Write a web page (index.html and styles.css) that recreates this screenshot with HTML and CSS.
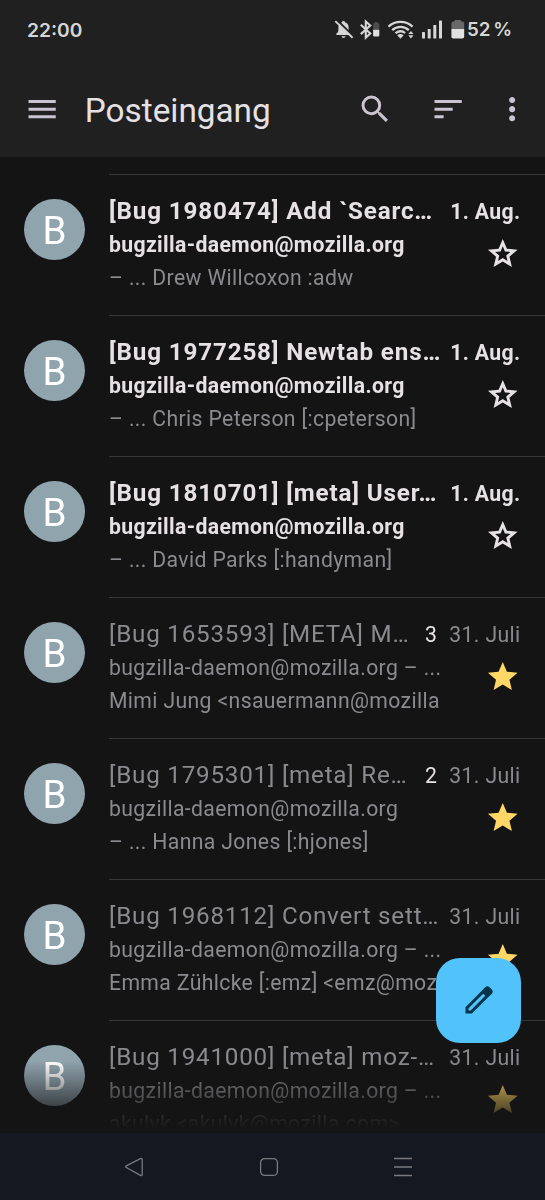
FILE: index.html
```html
<!DOCTYPE html>
<html lang="de">
<head>
<meta charset="utf-8">
<title>Posteingang</title>
<link rel="stylesheet" href="styles.css">
</head>
<body>
<svg class="defs" width="0" height="0">
  <symbol id="star" viewBox="0 0 24 24"><path d="M12 17.27 18.18 21l-1.64-7.03L22 9.24l-7.19-.61L12 2 9.19 8.63 2 9.24l5.46 4.73L5.82 21z"/></symbol>
  <symbol id="star-outline" viewBox="0 0 24 24"><path fill-rule="evenodd" d="M22 9.240l-7.190-.62L12 2 9.190 8.630 2 9.240l5.460 4.730L5.820 21 12 17.270 18.180 21l-1.630-7.030L22 9.240zM12 14.900l-3.200 1.950.85-3.650-2.830-2.450 3.730-.32L12 7l1.450 3.430 3.730.32-2.830 2.450.85 3.650z"/></symbol>
</svg>
<div class="phone">
  <header class="top">
    <div class="status">
      <span class="clock">22:00</span>
      <svg class="status-icons" viewBox="0 0 132 24" width="132" height="24">
        <path d="M2.400 16.900v-1.300q2-1 2-3V9.500q0-4.300 3.700-5.300 0-1.500 1.400-1.500t1.400 1.500q3.700 1 3.700 5.300v3.100q0 2 2 3v1.300z" fill="#d6d6d6"/>
        <path d="M7.500 18.300h4c-.4 2.300-3.600 2.300-4 0z" fill="#d6d6d6"/>
        <path d="M2.600 1.700 20 18.600" stroke="#202020" stroke-width="2" fill="none"/>
        <path d="M1.300 3.100 18.600 19.800" stroke="#d6d6d6" stroke-width="1.900" fill="none"/>
        <path d="M26.800 6.800 36.300 15.600 31.800 19.700V3.500L36.300 7.500 26.800 16.100" fill="none" stroke="#d6d6d6" stroke-width="2.100"/>
        <path d="M40.700 4h3v1.200h1.600v6.600h-6.200V5.200h1.600z" fill="#4c4c4c"/>
        <path d="M39.100 11.800h6.200v5.800q0 .8-.8.800h-4.600q-.8 0-.8-.8z" fill="#dedede"/>
        <g fill="none" stroke="#d6d6d6" stroke-width="2.300">
          <path d="M54.500 8.700a17.500 17.500 0 0 1 24 0"/>
          <path d="M58.200 12.200a12 12 0 0 1 16.600 0"/>
          <path d="M61.500 15.300a7 7 0 0 1 9.600-.3"/>
        </g>
        <path d="M63.200 17.200q3.200-2.200 6.400 0L66.400 20.700z" fill="#d6d6d6"/>
        <path d="M76.900 13l2.600 3.100h-5.200zM76.900 20.400l2.600-3.100h-5.200z" fill="#d6d6d6"/>
        <g fill="#d6d6d6">
          <rect x="88" y="14" width="3" height="6.500" rx=".6"/>
          <rect x="93.700" y="11" width="3" height="9.500" rx=".6"/>
          <rect x="99.300" y="7" width="3" height="13.500" rx=".6"/>
          <rect x="105" y="2.500" width="3" height="18" rx=".6"/>
        </g>
        <path d="M121.300 2h5q.8 0 .8.800v.8h1.300q1.800 0 1.800 1.800v5.900h-12.800V5.400q0-1.800 1.800-1.800h1.300v-.8q0-.8.800-.8z" fill="#696969"/>
        <path d="M117.400 11h12.800v7.700q0 1.800-1.800 1.800h-9.200q-1.800 0-1.800-1.800z" fill="#e2e2e2"/>
      </svg>
      <span class="percent">52 %</span>
    </div>
    <div class="toolbar">
      <svg class="icon" viewBox="0 0 24 24"><path d="M3 18h18v-2H3v2zm0-5h18v-2H3v2zm0-7v2h18V6H3z"/></svg>
      <h1 class="heading">Posteingang</h1>
      <svg class="icon" viewBox="0 0 24 24"><path d="M15.500 14h-.79l-.28-.27A6.471 6.471 0 0 0 16 9.500 6.500 6.500 0 1 0 9.500 16c1.610 0 3.090-.59 4.230-1.570l.27.28v.79l5 4.990L20.490 19l-4.990-5zm-6 0C7.010 14 5 11.990 5 9.500S7.010 5 9.500 5 14 7.010 14 9.500 11.990 14 9.500 14z"/></svg>
      <svg class="icon icon-sort" viewBox="0 0 24 24"><path d="M3 18h6v-2H3v2zM3 6v2h18V6H3zm0 7h12v-2H3v2z"/></svg>
      <svg class="icon icon-more" viewBox="0 0 24 24"><path d="M12 8c1.100 0 2-.9 2-2s-.9-2-2-2-2 .9-2 2 .9 2 2 2zm0 2c-1.100 0-2 .9-2 2s.9 2 2 2 2-.9 2-2-.9-2-2-2zm0 6c-1.100 0-2 .9-2 2s.9 2 2 2 2-.9 2-2-.9-2-2-2z"/></svg>
    </div>
  </header>

  <main class="list">
    <article class="row unread">
      <div class="avatar">B</div>
      <div class="body">
        <div class="line"><span class="subject">[Bug 1980474] Add `Searc…</span><span class="date">1. Aug.</span></div>
        <div class="details"><p class="text"><span class="sender">bugzilla-daemon@mozilla.org</span><br>– ... Drew Willcoxon :adw</p><svg class="star"><use href="#star-outline"/></svg></div>
      </div>
    </article>
    <article class="row unread">
      <div class="avatar">B</div>
      <div class="body">
        <div class="line"><span class="subject">[Bug 1977258] Newtab ens…</span><span class="date">1. Aug.</span></div>
        <div class="details"><p class="text"><span class="sender">bugzilla-daemon@mozilla.org</span><br>– ... Chris Peterson [:cpeterson]</p><svg class="star"><use href="#star-outline"/></svg></div>
      </div>
    </article>
    <article class="row unread">
      <div class="avatar">B</div>
      <div class="body">
        <div class="line"><span class="subject">[Bug 1810701] [meta] User…</span><span class="date">1. Aug.</span></div>
        <div class="details"><p class="text"><span class="sender">bugzilla-daemon@mozilla.org</span><br>– ... David Parks [:handyman]</p><svg class="star"><use href="#star-outline"/></svg></div>
      </div>
    </article>
    <article class="row">
      <div class="avatar">B</div>
      <div class="body">
        <div class="line"><span class="subject">[Bug 1653593] [META] M…</span><span class="count">3</span><span class="date">31. Juli</span></div>
        <div class="details"><p class="text">bugzilla-daemon@mozilla.org – ...<br>Mimi Jung &lt;nsauermann@mozilla</p><svg class="star"><use href="#star"/></svg></div>
      </div>
    </article>
    <article class="row">
      <div class="avatar">B</div>
      <div class="body">
        <div class="line"><span class="subject">[Bug 1795301] [meta] Re…</span><span class="count">2</span><span class="date">31. Juli</span></div>
        <div class="details"><p class="text">bugzilla-daemon@mozilla.org<br>– ... Hanna Jones [:hjones]</p><svg class="star"><use href="#star"/></svg></div>
      </div>
    </article>
    <article class="row">
      <div class="avatar">B</div>
      <div class="body">
        <div class="line"><span class="subject">[Bug 1968112] Convert sett…</span><span class="date">31. Juli</span></div>
        <div class="details"><p class="text">bugzilla-daemon@mozilla.org – ...<br>Emma Zühlcke [:emz] &lt;emz@moz</p><svg class="star"><use href="#star"/></svg></div>
      </div>
    </article>
    <article class="row">
      <div class="avatar">B</div>
      <div class="body">
        <div class="line"><span class="subject">[Bug 1941000] [meta] moz-…</span><span class="date">31. Juli</span></div>
        <div class="details"><p class="text">bugzilla-daemon@mozilla.org – ...<br>akulyk &lt;akulyk@mozilla.com&gt;</p><svg class="star"><use href="#star"/></svg></div>
      </div>
    </article>
  </main>

  <button class="fab" aria-label="Verfassen">
    <svg viewBox="0 0 24 24" width="36" height="36"><path d="M5 19h1.425L16.200 9.225 14.775 7.800 5 17.575V19Zm-2 2v-4.250L16.200 3.575q.3-.275.663-.425T17.625 3q.4 0 .775.150t.65.450L20.425 5q.3.275.438.650T21 6.400q0 .4-.137.763t-.438.662L7.250 21H3Z"/><path d="M14.800 5 19 9.200l1.400-1.400q.6-.6.600-1.400t-.6-1.400L19 3.600q-.6-.6-1.400-.6t-1.400.6z"/></svg>
  </button>

  <nav class="nav">
    <svg viewBox="0 0 20 20" width="20" height="20"><path d="M16.500 1.700 2.300 8.900q-1.400.8 0 1.600l14.200 7.800q1.700.8 1.700-.8V2.500q0-1.600-1.700-.8z"/></svg>
    <svg viewBox="0 0 20 20" width="20" height="20"><rect x="1.600" y="1.600" width="16.800" height="16.800" rx="4"/></svg>
    <svg viewBox="0 0 20 20" width="20" height="20"><path d="M1 1.500h18M1 10h18M1 18.500h18"/></svg>
  </nav>
</div>
</body>
</html>
```
FILE: styles.css
```css
* { box-sizing: border-box; }

body {
  margin: 0;
  background: #141414;
  font-family: Roboto, "Liberation Sans", sans-serif;
}

.defs { position: absolute; }

.phone {
  position: relative;
  display: flex;
  flex-direction: column;
  width: 545px;
  height: 1200px;
  overflow: hidden;
}

.top {
  flex: none;
  height: 157px;
  background: #202020;
}

.status {
  display: flex;
  align-items: center;
  height: 60px;
  padding: 0 34px 0 27px;
  color: #d6d6d6;
  font: 600 19.200px/60px Inter, sans-serif;
}

.clock { flex: 1; }

.percent {
  width: 44px;
  margin-left: 1px;
  font-size: 18.800px;
  word-spacing: -2px;
  white-space: nowrap;
}

.toolbar {
  display: flex;
  align-items: center;
  height: 98px;
  padding: 0 15px 0 24px;
}

.icon {
  flex: none;
  width: 36.300px;
  height: 36.300px;
  fill: #cac4d0;
}

.icon-sort { margin-left: 36.800px; }
.icon-more { margin-left: 27.500px; }

.heading {
  flex: 1;
  margin: 3px 0 0 24.500px;
  color: #e6e1e5;
  font-size: 33.300px;
  font-weight: 400;
}

.list {
  flex: 1;
  min-height: 0;
  padding-top: 17px;
  overflow: hidden;
  mask-image: linear-gradient(#000 0, #000 904px, transparent 972px);
}

.row {
  display: flex;
  height: 141px;
  padding-left: 24px;
  color: #8b8a8f;
}

.avatar {
  flex: none;
  width: 61px;
  height: 61px;
  margin: 25px 24px 0 0;
  border-radius: 50%;
  background: #90a4ae;
  color: #fff;
  font-size: 38.500px;
  line-height: 63px;
  text-align: center;
}

.body {
  flex: 1;
  min-width: 0;
  padding: 20px 24.500px 0 0;
  border-top: 1px solid #363636;
}

.line {
  display: flex;
  align-items: baseline;
  height: 33px;
  line-height: 33px;
  white-space: nowrap;
}

.subject {
  flex: 1;
  font-size: 24.200px;
  letter-spacing: .78px;
}

.count,
.date {
  font-size: 21.200px;
  letter-spacing: .36px;
}

.count {
  margin-right: 12px;
  color: #e6e1e5;
}

.details {
  display: flex;
  justify-content: space-between;
}

.text {
  margin: 0;
  font-size: 21.200px;
  line-height: 33px;
  letter-spacing: .36px;
  white-space: nowrap;
}

.star {
  flex: none;
  width: 35.500px;
  height: 35.500px;
  margin: 7.500px .3px 0 0;
  fill: #ffd766;
}

.unread .subject,
.unread .date,
.unread .sender {
  color: #e6e1e5;
  font-weight: 700;
}

.unread .subject { letter-spacing: .85px; }

.unread .star { fill: #e6e1e5; }

.fab {
  position: absolute;
  top: 957.500px;
  right: 24px;
  display: grid;
  place-items: center;
  width: 85px;
  height: 85px;
  padding: 0;
  border: 0;
  border-radius: 24px;
  background: #51c2fa;
  fill: #06344a;
}

.nav {
  flex: none;
  display: flex;
  justify-content: center;
  align-items: center;
  gap: 114.500px;
  height: 67px;
  padding-right: 8px;
  background: #141820;
  fill: none;
  stroke: #77797d;
  stroke-width: 1.300;
}
```
